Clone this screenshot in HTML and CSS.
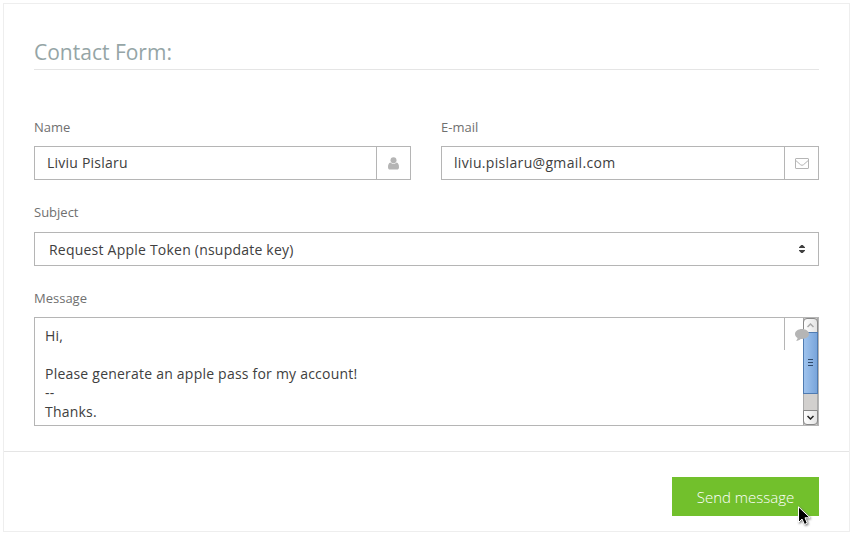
FILE: index.html
```
<!DOCTYPE html>
<html lang="en">

  <head>
    <meta charset="UTF-8">
    <meta name="viewport" content="width=device-width, initial-scale=1.0">
    <title>Contact Form</title>
    <link rel="stylesheet" href="styles.css">
  </head>

  <body>
    <form class="contact">
      <h2 class="title">Contact Form:</h2>

      <div class="fields">
        <div class="row">
          <div class="field">
            <label for="name">Name</label>
            <div class="box">
              <input type="text" id="name" value="Liviu Pislaru">
              <span class="icon">
                <svg width="11" height="13" viewBox="0 0 11 13">
                  <circle cx="5.5" cy="3.2" r="3" />
                  <path d="M2.5 5.5C.6 6 0 7.900 0 10.200C0 12 .8 12.500 2 12.500H9C10.200 12.500 11 12 11 10.200C11 7.900 10.400 6 8.500 5.500C7 7.200 4 7.200 2.500 5.500Z" />
                </svg>
              </span>
            </div>
          </div>
          <div class="field">
            <label for="email">E-mail</label>
            <div class="box">
              <input type="text" id="email" class="email" value="liviu.pislaru@gmail.com">
              <span class="icon">
                <svg class="line" width="14" height="12" viewBox="0 0 14 12">
                  <rect x=".5" y="1.5" width="13" height="10" rx=".5" />
                  <path d="M.8 3.500L5.500 7.700Q7 9 8.500 7.700L13.200 3.500" />
                </svg>
              </span>
            </div>
          </div>
        </div>

        <div class="field subject">
          <label for="subject">Subject</label>
          <div class="box">
            <select id="subject">
              <option>Request Apple Token (nsupdate key)</option>
            </select>
            <svg class="arrows" width="6" height="8" viewBox="0 0 6 8">
              <path d="M2.300 0H3.700L6 2.300V3H0V2.300ZM0 5H6V5.700L3.700 8H2.300L0 5.700Z" />
            </svg>
          </div>
        </div>

        <div class="field message">
          <label for="message">Message</label>
          <div class="box area">
            <textarea id="message">Hi,

Please generate an apple pass for my account!
--
Thanks.</textarea>
            <span class="divider"></span>
            <div class="scrollbar">
              <span class="arrow up">
                <svg width="7" height="5" viewBox="0 0 7 5"><path d="M.5 4L3.500 1L6.500 4" /></svg>
              </span>
              <span class="thumb"><i></i><i></i><i></i></span>
              <span class="arrow down">
                <svg width="7" height="5" viewBox="0 0 7 5"><path d="M.5 1L3.500 4L6.500 1" /></svg>
              </span>
            </div>
            <svg class="comment" width="14" height="12" viewBox="0 0 14 12">
              <path d="M7 0C3 0 0 2.200 0 5C0 6.600 1 8 2.600 9C2.400 10.200 1.800 11 1 11.700C3 11.700 4.600 11 5.700 9.900C10.500 10.400 14 8 14 5C14 2.200 11 0 7 0Z" />
            </svg>
          </div>
        </div>
      </div>

      <div class="footer">
        <button type="button" class="send">Send message</button>
        <!-- mouse pointer -->
        <svg class="pointer" width="14" height="20" viewBox="0 0 14 20">
          <path d="M.5 .8V16.500L4 13L6.500 18.500L9.300 17.200L7 11.800H12Z" />
        </svg>
      </div>
    </form>
  </body>

</html>
```

FILE: styles.css
```
* {
  box-sizing: border-box;
}

body {
  margin: 3px;
  background-color: #fff;
  font-family: "Open Sans", "Noto Sans", sans-serif;
  color: #404040;
}

.contact {
  width: 847px;
  height: 529px;
  border: 1px solid #eee;
}

.title {
  margin: 30px 30px 0;
  height: 36px;
  border-bottom: 1px solid #e5e5e5;
  font-size: 21px;
  font-weight: 400;
  line-height: 37px;
  color: #95a5a6;
}

.fields {
  height: 381px;
  padding: 48px 30px 0;
}

.row {
  display: grid;
  grid-template-columns: 377px 378px;
  gap: 30px;
}

.field label {
  display: block;
  height: 28px;
  font-size: 13px;
  line-height: 19px;
  color: #707070;
}

.subject {
  margin-top: 23px;
}

.subject label {
  height: 29px;
}

.message {
  margin-top: 23px;
}

.box {
  position: relative;
  display: flex;
  height: 34px;
  border: 1px solid #b5b5b5;
}

input,
select,
textarea {
  flex: 1;
  min-width: 0;
  margin: 0;
  border: 0;
  outline: none;
  background: none;
  font-family: inherit;
  font-size: 14px;
  letter-spacing: .22px;
  color: #404040;
}

input {
  padding: 0 12px 2px;
}

.email {
  letter-spacing: .33px;
}

select {
  padding: 0 14px;
  appearance: none;
}

textarea {
  padding: 8px 10px;
  line-height: 19px;
  overflow: hidden;
  resize: none;
}

.icon {
  display: flex;
  align-items: center;
  justify-content: center;
  width: 34px;
  border-left: 1px solid #b5b5b5;
}

.icon svg {
  fill: #b5b5b5;
}

.icon .line {
  fill: none;
  stroke: #b5b5b5;
}

.arrows {
  position: absolute;
  top: 12px;
  right: 13px;
  fill: #404040;
}

.area {
  height: 109px;
}

.divider {
  position: absolute;
  top: 0;
  right: 33px;
  width: 1px;
  height: 32px;
  background-color: #b5b5b5;
}

.comment {
  position: absolute;
  top: 11px;
  right: 9px;
  fill: #b5b5b5;
}

/* scrollbar */
.scrollbar {
  position: absolute;
  top: 0;
  right: 0;
  display: flex;
  flex-direction: column;
  width: 15px;
  height: 107px;
  background-color: #d2d0ce;
  border-left: 1px solid #aaa;
  border-right: 1px solid #aaa;
}

.arrow {
  display: flex;
  align-items: center;
  justify-content: center;
  height: 15px;
  margin: 0 -1px;
  border: 1px solid #888;
  background: linear-gradient(to right, #fff, #e4e4e4);
}

.arrow svg {
  fill: none;
  stroke: #aaa;
  stroke-width: 1.5;
}

.up {
  border-radius: 4px 4px 0 0;
}

.down {
  margin-top: auto;
  border-radius: 0 0 4px 4px;
}

.down svg {
  stroke: #222;
}

.thumb {
  display: flex;
  flex-direction: column;
  align-items: center;
  justify-content: center;
  gap: 2px;
  height: 62px;
  margin: -1px -1px 0;
  padding-bottom: 1px;
  border: 1px solid #4f7bb1;
  background: linear-gradient(to right, #9fc3ed, #79a5db);
}

.thumb i {
  width: 5px;
  height: 1px;
  background-color: #304a6b;
}

.footer {
  position: relative;
  display: flex;
  justify-content: flex-end;
  padding: 25px 30px 0;
  border-top: 1px solid #e5e5e5;
}

.send {
  width: 147px;
  height: 39px;
  padding: 0;
  border: 0;
  background-color: #72c02c;
  font-family: inherit;
  font-size: 15px;
  font-weight: 300;
  color: #fff;
}

.pointer {
  position: absolute;
  top: 54px;
  right: 37px;
  fill: #000;
  stroke: #fff;
  filter: drop-shadow(1px 1px 1px #777);
}
```
